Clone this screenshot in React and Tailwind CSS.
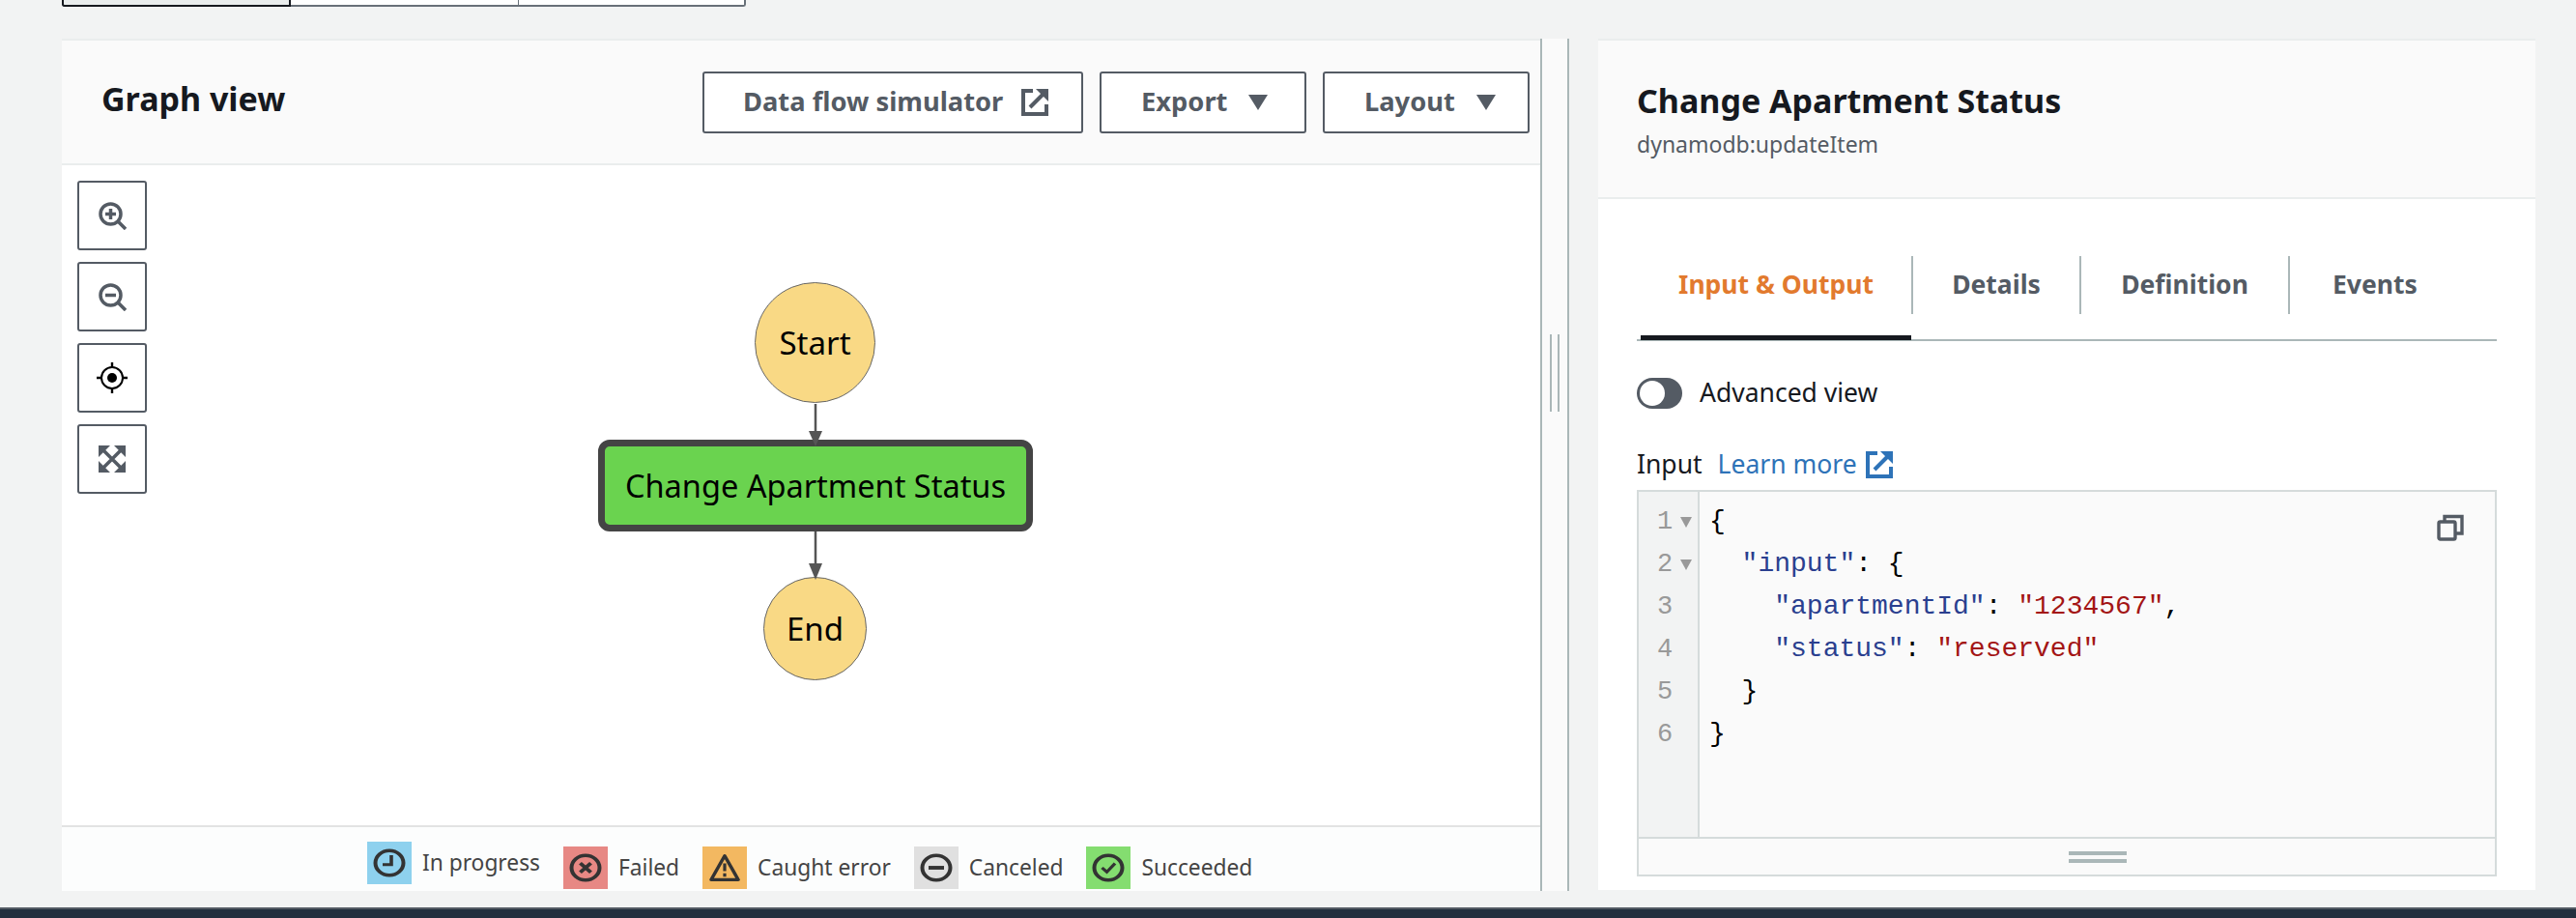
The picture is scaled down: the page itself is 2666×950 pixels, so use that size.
import React from 'react';

const sans = 'font-["Noto_Sans",sans-serif]';

function ExternalIcon({ className }) {
  return (
    <svg viewBox="0 0 28 28" className={className} fill="none" stroke="currentColor">
      <path d="M12 2H2V26H26V16" strokeWidth="4" />
      <path d="M9 19L22 6" strokeWidth="4" />
      <path d="M15 0H28V13Z" fill="currentColor" stroke="none" />
    </svg>
  );
}

function Caret() {
  return <span className="block w-0 h-0 border-l-[10px] border-r-[10px] border-t-[16px] border-l-transparent border-r-transparent border-t-[#545b64]" />;
}

function ZoomIcon({ plus }) {
  return (
    <svg viewBox="0 0 29 29" className="w-[29px] h-[29px]" fill="none" stroke="#545b64">
      <circle cx="12.5" cy="12.5" r="10.5" strokeWidth="3.5" />
      <path d="M20 20l8 8" strokeWidth="3.5" />
      <path d="M7 12.5h11" strokeWidth="3.5" />
      {plus && <path d="M12.5 7v11" strokeWidth="3.5" />}
    </svg>
  );
}

function LocateIcon() {
  return (
    <svg viewBox="0 0 32 32" className="w-[32px] h-[32px]" fill="none" stroke="#000">
      <circle cx="16" cy="16" r="11" strokeWidth="2" />
      <circle cx="16" cy="16" r="5" fill="#000" stroke="none" />
      <path d="M16 0v6M16 26v6M0 16h6M26 16h6" strokeWidth="2.4" />
    </svg>
  );
}

function FitIcon() {
  return (
    <svg viewBox="0 0 28 28" className="w-[28px] h-[28px]" fill="#545b64">
      <path d="M0 0H12L0 12Z M28 0V12L16 0Z M28 28H16L28 16Z M0 28V16L12 28Z" />
      <path d="M3 3L25 25M25 3L3 25" stroke="#545b64" strokeWidth="3.6" />
    </svg>
  );
}

function CopyIcon() {
  return (
    <svg viewBox="0 0 28 28" className="w-[28px] h-[28px]" fill="none" stroke="#545b64" strokeWidth="3.4">
      <rect x="2" y="8" width="17" height="18" rx="1.5" />
      <path d="M8 7V2.5h18V20h-6" />
    </svg>
  );
}

function Glyph({ children }) {
  return (
    <svg viewBox="0 0 34 34" preserveAspectRatio="none" className="w-[34px] h-[30px]" fill="none" stroke="#333">
      {children}
    </svg>
  );
}

const ring = <circle cx="17" cy="17" r="14.5" strokeWidth="4" />;

const legend = [
  { label: 'In progress', bg: 'bg-[#8ed1ee]', up: true, icon: <Glyph>{ring}<path d="M19 8v11h-9" strokeWidth="3.6" /></Glyph> },
  { label: 'Failed', bg: 'bg-[#e78884]', icon: <Glyph>{ring}<path d="M11.5 11.5l11 11M22.5 11.5l-11 11" strokeWidth="4" /></Glyph> },
  { label: 'Caught error', bg: 'bg-[#f3b861]', icon: <Glyph><path d="M17 3L31 31H3Z" strokeWidth="3.6" strokeLinejoin="round" /><path d="M17 12v9M17 23.5v4" strokeWidth="3.2" /></Glyph> },
  { label: 'Canceled', bg: 'bg-[#e0e0e0]', icon: <Glyph>{ring}<path d="M9 17h16" strokeWidth="4.4" /></Glyph> },
  { label: 'Succeeded', bg: 'bg-[#84dd70]', icon: <Glyph>{ring}<path d="M10.5 17l5 5 8.5-10" strokeWidth="3.4" /></Glyph> },
];

function ToolButton({ children }) {
  return (
    <button className="w-[72px] h-[72px] flex items-center justify-center bg-white border-2 border-[#545b64] rounded-[3px]">
      {children}
    </button>
  );
}

function HeadButton({ children, className }) {
  return (
    <button className={`h-[64px] flex items-center border-2 border-[#545b64] rounded-[3px] bg-white text-[#545b64] text-[27.3px] font-bold ${className}`}>
      {children}
    </button>
  );
}

function Diagram() {
  return (
    <div className="relative flex-1 bg-white">
      <div className="absolute left-[16px] top-[16px] flex flex-col gap-[12px]">
        <ToolButton><ZoomIcon plus /></ToolButton>
        <ToolButton><ZoomIcon /></ToolButton>
        <ToolButton><LocateIcon /></ToolButton>
        <ToolButton><FitIcon /></ToolButton>
      </div>

      <div className="absolute left-[717px] top-[121px] w-[125px] h-[125px] rounded-full bg-[#f9d985] border border-[#666] flex items-center justify-center text-[33px] text-black">Start</div>
      <div className="absolute left-[555px] top-[284px] w-[450px] h-[95px] rounded-[12px] bg-[#6ad34f] border-[7px] border-[#444] flex items-center justify-center pt-[2px] text-[32.5px] text-black">Change Apartment Status</div>
      <div className="absolute left-[726px] top-[426px] w-[107px] h-[107px] rounded-full bg-[#f9d985] border border-[#666] flex items-center justify-center text-[33px] text-black">End</div>

      <svg className="absolute left-[760px] top-[240px] w-[40px] h-[200px]" viewBox="0 0 40 200" fill="#555" stroke="none">
        <path d="M20 7V38M20 139V174" stroke="#555" strokeWidth="2.5" />
        <path d="M13 35H27L20 51Z" />
        <path d="M13 172H27L20 189Z" />
      </svg>
    </div>
  );
}

function Legend() {
  return (
    <div className="h-[68px] shrink-0 border-t-2 border-[#e2e3e3] bg-[#fcfdfd] flex items-end pl-[316px] pb-[2px] text-[#444] text-[22.75px]">
      {legend.map(item => (
        <div key={item.label} className={`flex items-center mr-[24px] ${item.up ? 'mb-[5px]' : ''}`}>
          <span className={`w-[46px] h-[44px] flex items-center justify-center ${item.bg}`}>{item.icon}</span>
          <span className="ml-[11px] leading-none">{item.label}</span>
        </div>
      ))}
    </div>
  );
}

const code = [
  [<span key="a">{'{'}</span>],
  [<span key="a">{'  '}</span>, <span key="b" className="text-[#2a3f8f]">"input"</span>, <span key="c">: {'{'}</span>],
  [<span key="a">{'    '}</span>, <span key="b" className="text-[#2a3f8f]">"apartmentId"</span>, <span key="c">: </span>, <span key="d" className="text-[#a31515]">"1234567"</span>, <span key="e">,</span>],
  [<span key="a">{'    '}</span>, <span key="b" className="text-[#2a3f8f]">"status"</span>, <span key="c">: </span>, <span key="d" className="text-[#a31515]">"reserved"</span>],
  [<span key="a">{'  '}{'}'}</span>],
  [<span key="a">{'}'}</span>],
];

function Editor() {
  return (
    <div className="flex flex-col h-[400px] border-2 border-[#d5dbdb] bg-[#fafafa] relative">
      <div className="flex flex-1 min-h-0">
        <div className="w-[63px] shrink-0 bg-[#f2f3f3] border-r-2 border-[#d5dbdb] pt-[9px] pl-[19px] font-['Liberation_Mono',monospace] text-[27px] text-[#999]">
          {code.map((_, i) => (
            <div key={i} className="h-[44px] flex items-center">
              <span>{i + 1}</span>
              {i < 2 && <span className="ml-[8px] w-0 h-0 border-l-[6px] border-r-[6px] border-t-[11px] border-l-transparent border-r-transparent border-t-[#999]" />}
            </div>
          ))}
        </div>
        <div className="flex-1 pt-[9px] pl-[10px] font-['Liberation_Mono',monospace] text-[28px] text-black whitespace-pre">
          {code.map((parts, i) => (
            <div key={i} className="h-[44px] leading-[44px]">{parts}</div>
          ))}
        </div>
      </div>
      <div className="h-[39px] shrink-0 border-t-2 border-[#d5dbdb] pl-[64px] flex flex-col items-center justify-center gap-[4px]">
        <span className="block w-[60px] h-[4px] bg-[#aab7b8]" />
        <span className="block w-[60px] h-[4px] bg-[#aab7b8]" />
      </div>
      <div className="absolute right-[32px] top-[23px]"><CopyIcon /></div>
    </div>
  );
}

export default function App() {
  return (
    <div className={`w-[2666px] h-[950px] bg-[#f2f3f3] overflow-hidden flex flex-col ${sans}`}>
      <div className="h-[40px] shrink-0 pl-[64px]">
        <div className="w-[708px] h-[7px] flex border-2 border-t-0 border-[#687078] rounded-b-[3px] bg-white">
          <div className="w-[237px] -ml-[2px] -mb-[2px] bg-[#eaeded] border-2 border-t-0 border-[#16191f] rounded-bl-[3px]" />
          <div className="w-[236px] border-r border-[#687078]" />
        </div>
      </div>

      <div className="flex h-[882px] shrink-0 pl-[64px]">
        <div className="w-[1530px] flex flex-col border-t-2 border-[#eaeded]">
          <div className="h-[129px] shrink-0 bg-[#fafafa] border-b-2 border-[#eaeded] flex items-center pl-[41px] pr-[11px]">
            <h2 className="text-[34px] font-bold text-[#16191f] -mt-[6px]">Graph view</h2>
            <div className="ml-auto flex gap-[17px]">
              <HeadButton className="w-[394px] pl-[40px]">
                <span>Data flow simulator</span>
                <ExternalIcon className="w-[28px] h-[28px] ml-[19px]" />
              </HeadButton>
              <HeadButton className="w-[214px] pl-[41px]">
                <span>Export</span>
                <span className="ml-[22px]"><Caret /></span>
              </HeadButton>
              <HeadButton className="w-[214px] pl-[41px]">
                <span>Layout</span>
                <span className="ml-[22px]"><Caret /></span>
              </HeadButton>
            </div>
          </div>
          <Diagram />
          <Legend />
        </div>

        <div className="w-[30px] shrink-0 bg-[#fafafa] border-x-2 border-[#aab7b8] flex items-center justify-center gap-[6px] h-[882px]">
          <span className="block w-[2px] h-[80px] bg-[#aab7b8] mb-[190px]" />
          <span className="block w-[2px] h-[80px] bg-[#aab7b8] mb-[190px]" />
        </div>

        <div className="w-[970px] ml-[30px] h-[881px] bg-white flex flex-col">
          <div className="h-[166px] shrink-0 bg-[#fafafa] border-y-2 border-t-[#eaeded] border-b-[#eaeded] pl-[40px] pt-[38px]">
            <h2 className="text-[34px] leading-[48px] font-bold text-[#16191f]">Change Apartment Status</h2>
            <p className="text-[23px] leading-[32px] mt-[5px] text-[#545b64]">dynamodb:updateItem</p>
          </div>

          <div className="flex-1 pl-[40px] pr-[40px] flex flex-col">
            <div className="mt-[59px] h-[88px] w-[890px] border-b-2 border-[#aab7b8] flex text-[26.5px] font-bold text-[#545b64] relative">
              <div className="w-[286px] h-[60px] flex items-center justify-center border-r-2 border-[#aab7b8] text-[#e27a2e] pl-[4px]">Input &amp; Output</div>
              <div className="w-[174px] h-[60px] flex items-center justify-center border-r-2 border-[#aab7b8]">Details</div>
              <div className="w-[216px] h-[60px] flex items-center justify-center border-r-2 border-[#aab7b8]">Definition</div>
              <div className="h-[60px] flex items-center pl-[44px]">Events</div>
              <div className="absolute left-[4px] bottom-[-1px] w-[280px] h-[5px] bg-[#16191f]" />
            </div>

            <div className="mt-[38px] flex items-center h-[32px]">
              <span className="w-[47px] h-[32px] rounded-full bg-[#545b64] flex items-center pl-[3px]">
                <span className="block w-[26px] h-[26px] rounded-full bg-white" />
              </span>
              <span className="ml-[18px] text-[26.5px] text-[#16191f]">Advanced view</span>
            </div>

            <div className="mt-[44px] h-[28px] flex items-center text-[26.5px]">
              <span className="text-[#16191f]">Input</span>
              <span className="ml-[16px] text-[#2e73b8]">Learn more</span>
              <ExternalIcon className="w-[28px] h-[28px] ml-[9px] text-[#2e73b8]" />
            </div>

            <div className="mt-[12px]"><Editor /></div>
          </div>
        </div>
      </div>

      <div className="mt-auto h-[11px] shrink-0 border-t-2 border-[#545b64] bg-[#232f3e]" />
    </div>
  );
}
